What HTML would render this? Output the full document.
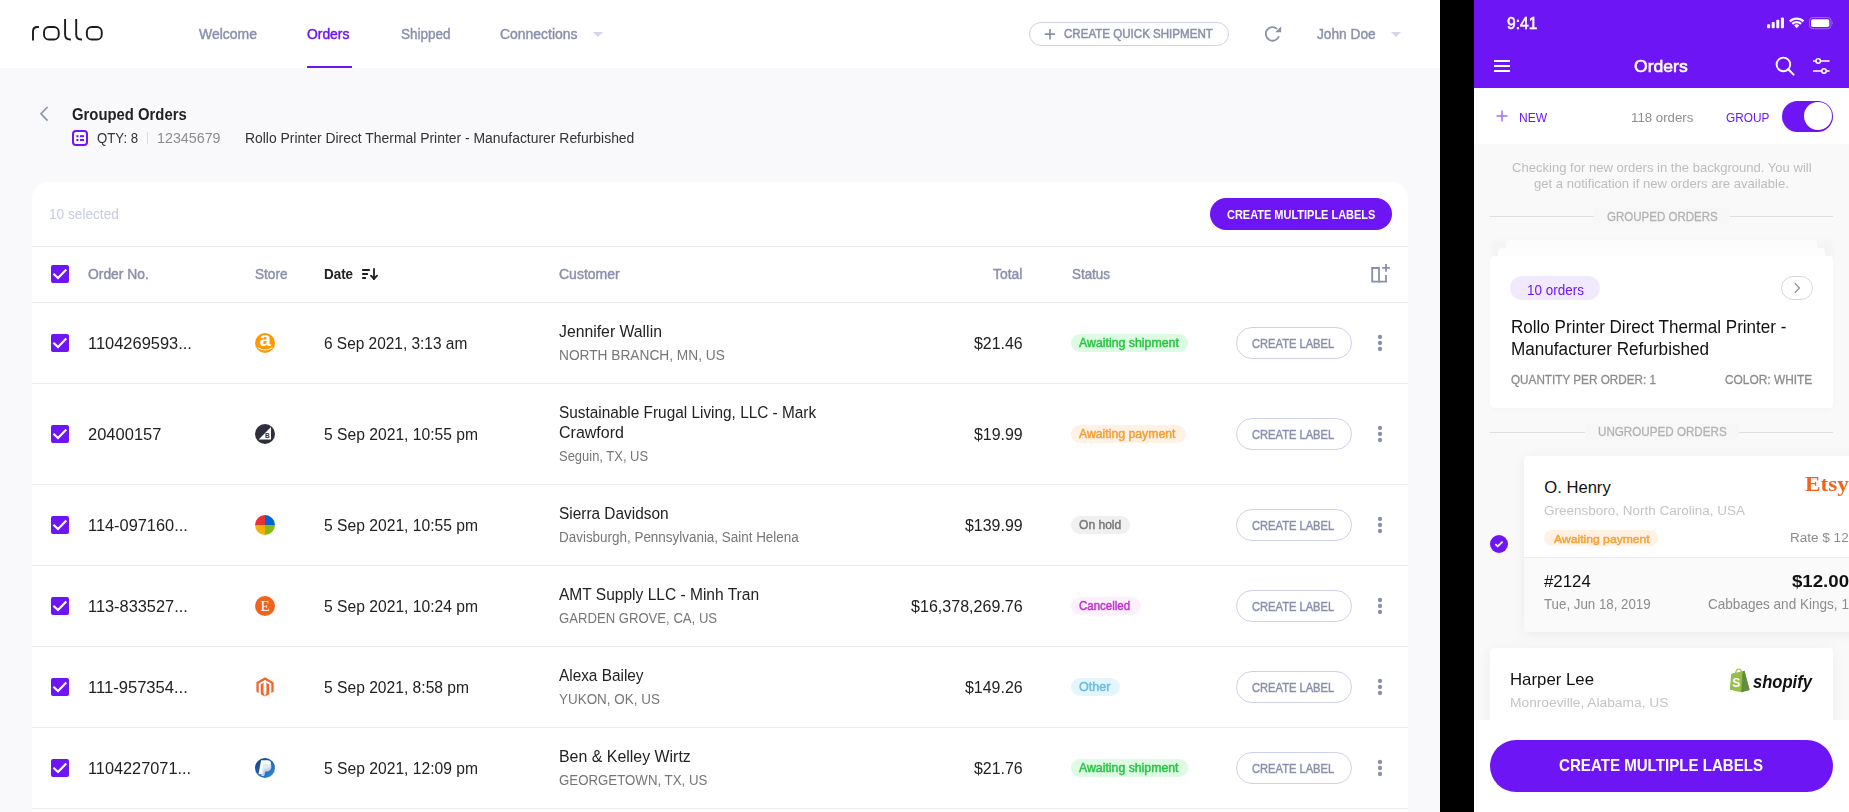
<!DOCTYPE html>
<html><head><meta charset="utf-8"><style>
html,body{margin:0;padding:0;width:1849px;height:812px;overflow:hidden;background:#f9f9fb;}
body{position:relative;font-family:"Liberation Sans",sans-serif;}
.b{position:absolute;box-sizing:content-box;}
.t{position:absolute;white-space:nowrap;line-height:normal;transform-origin:0 0;}
</style></head><body>
<div class="b" style="left:0px;top:0px;width:1440px;height:812px;background:#f9f9fb;"></div>
<div class="b" style="left:0px;top:0px;width:1440px;height:68px;background:#ffffff;"></div>
<div class="b" style="left:32px;top:182px;width:1376px;height:640px;background:#ffffff;border-radius:16px 16px 0 0;"></div>
<div class="b" style="left:1440px;top:0px;width:34px;height:812px;background:#000000;"></div>
<div class="b" style="left:1474px;top:0px;width:375px;height:812px;background:#f9f9f9;"></div>
<svg class="b" style="left:0;top:0" width="120" height="60" viewBox="0 0 120 60"><g fill="none" stroke="#1c1c1c" stroke-width="1.9" stroke-linecap="butt">
<path d="M33 40.6 V31.5 Q33 27.05 37.5 27.05 H38.9"/>
<rect x="44.05" y="27.05" width="14.7" height="12.5" rx="4.9"/>
<path d="M65.1 18.9 V34.6 Q65.1 39.55 70.1 39.55 H70.9"/>
<path d="M76.2 18.9 V34.6 Q76.2 39.55 81.2 39.55 H82"/>
<rect x="86.85" y="27.05" width="14.9" height="12.5" rx="4.9"/>
</g></svg>
<div class="t" style="left:199.20px;top:25.50px;font-size:14.80px;color:#8a90ab;-webkit-text-stroke:0.45px #8a90ab;transform:scaleX(0.9446);font-family:'Liberation Sans',sans-serif;">Welcome</div>
<div class="t" style="left:307.30px;top:25.50px;font-size:14.80px;color:#6e15f5;-webkit-text-stroke:0.45px #6e15f5;transform:scaleX(0.9370);font-family:'Liberation Sans',sans-serif;">Orders</div>
<div class="t" style="left:400.50px;top:25.50px;font-size:14.80px;color:#8a90ab;-webkit-text-stroke:0.45px #8a90ab;transform:scaleX(0.9134);font-family:'Liberation Sans',sans-serif;">Shipped</div>
<div class="t" style="left:499.50px;top:25.50px;font-size:14.80px;color:#8a90ab;-webkit-text-stroke:0.45px #8a90ab;transform:scaleX(0.9429);font-family:'Liberation Sans',sans-serif;">Connections</div>
<div class="b" style="left:307px;top:66px;width:45px;height:2px;background:#6e15f5;"></div>
<svg class="b" style="left:593px;top:32px" width="10" height="5" viewBox="0 0 10 5"><path d="M0 0 H10 L5.0 5 Z" fill="#d3d6ea"/></svg>
<svg class="b" style="left:1391px;top:32px" width="10" height="5" viewBox="0 0 10 5"><path d="M0 0 H10 L5.0 5 Z" fill="#d3d6ea"/></svg>
<div class="b" style="left:1029px;top:22px;width:198px;height:22px;background:transparent;border:1px solid #cdd0e6;border-radius:12px;"></div>
<svg class="b" style="left:1044px;top:28px" width="12" height="12" viewBox="0 0 12 12"><path d="M6 1 V11.4 M0.8 6.2 H11" stroke="#8a90ab" stroke-width="1.7"/></svg>
<div class="t" style="left:1063.50px;top:27.48px;font-size:12.50px;color:#8a90ab;-webkit-text-stroke:0.5px #8a90ab;transform:scaleX(0.9248);font-family:'Liberation Sans',sans-serif;">CREATE QUICK SHIPMENT</div>
<svg class="b" style="left:1265px;top:26px" width="17" height="17" viewBox="0 0 17 17"><path d="M14 10.2 A6.8 6.8 0 1 1 12.15 2.85" fill="none" stroke="#8a90ab" stroke-width="1.8"/><path d="M10.1 6.3 L16.1 6.3 L16.1 0.4 Z" fill="#8a90ab"/></svg>
<div class="t" style="left:1317.00px;top:25.70px;font-size:14.80px;color:#8a90ab;-webkit-text-stroke:0.45px #8a90ab;transform:scaleX(0.9266);font-family:'Liberation Sans',sans-serif;">John Doe</div>
<svg class="b" style="left:38px;top:105px" width="12" height="18" viewBox="0 0 12 18"><path d="M9.5 2 L3 8.8 L9.5 15.6" fill="none" stroke="#8a90ab" stroke-width="1.6"/></svg>
<div class="t" style="left:72.30px;top:105.15px;font-size:16.40px;color:#222;font-weight:700;transform:scaleX(0.9064);font-family:'Liberation Sans',sans-serif;">Grouped Orders</div>
<svg class="b" style="left:72px;top:130px" width="16" height="16" viewBox="0 0 16 16"><rect x="1" y="1" width="14" height="14" rx="3" fill="none" stroke="#6e15f5" stroke-width="2"/><rect x="4.4" y="5.2" width="2" height="2" fill="#6e15f5"/><rect x="8" y="5.2" width="4" height="2" fill="#6e15f5"/><rect x="4.4" y="9" width="2" height="2" fill="#6e15f5"/><rect x="8" y="9" width="4" height="2" fill="#6e15f5"/></svg>
<div class="t" style="left:96.70px;top:129.70px;font-size:14.58px;color:#333;transform:scaleX(0.9051);font-family:'Liberation Sans',sans-serif;">QTY: 8</div>
<div class="b" style="left:147px;top:132px;width:1px;height:12px;background:#dcdcdc;"></div>
<div class="t" style="left:156.80px;top:129.70px;font-size:14.58px;color:#8c8c8c;transform:scaleX(0.9792);font-family:'Liberation Sans',sans-serif;">12345679</div>
<div class="t" style="left:245.40px;top:129.80px;font-size:14.58px;color:#333;transform:scaleX(0.9541);font-family:'Liberation Sans',sans-serif;">Rollo Printer Direct Thermal Printer - Manufacturer Refurbished</div>
<div class="t" style="left:48.70px;top:205.80px;font-size:14.58px;color:#c8cbe0;transform:scaleX(0.9368);font-family:'Liberation Sans',sans-serif;">10 selected</div>
<div class="b" style="left:1210px;top:198px;width:182px;height:32px;background:#6e15f5;border-radius:16px;"></div>
<div class="t" style="left:1227.20px;top:207.77px;font-size:12.40px;color:#fff;font-weight:700;transform:scaleX(0.8858);font-family:'Liberation Sans',sans-serif;">CREATE MULTIPLE LABELS</div>
<div class="b" style="left:32px;top:246px;width:1376px;height:1px;background:#ececec;"></div>
<svg class="b" style="left:51px;top:265px" width="18" height="18" viewBox="0 0 18 18"><rect width="18" height="18" rx="2" fill="#6e15f5"/><path d="M2.4 8.8 L7 13 L15.3 4.5" fill="none" stroke="#fff" stroke-width="2.1"/></svg>
<div class="t" style="left:88.40px;top:265.70px;font-size:14.58px;color:#8a90ab;-webkit-text-stroke:0.45px #8a90ab;transform:scaleX(0.9515);font-family:'Liberation Sans',sans-serif;">Order No.</div>
<div class="t" style="left:255.20px;top:265.70px;font-size:14.58px;color:#8a90ab;-webkit-text-stroke:0.45px #8a90ab;transform:scaleX(0.9339);font-family:'Liberation Sans',sans-serif;">Store</div>
<div class="t" style="left:323.60px;top:265.70px;font-size:14.58px;color:#222;font-weight:700;transform:scaleX(0.9192);font-family:'Liberation Sans',sans-serif;">Date</div>
<svg class="b" style="left:361px;top:268px" width="18" height="13" viewBox="0 0 18 13"><g fill="#1e1e1e"><rect x="1.1" y="1.1" width="7.7" height="1.8" rx="0.5"/><rect x="1.1" y="5.1" width="5.9" height="1.8" rx="0.5"/><rect x="1.1" y="9.1" width="3.9" height="1.8" rx="0.5"/></g><path d="M13 0.9 V11" stroke="#1e1e1e" stroke-width="1.8" stroke-linecap="round"/><path d="M10 7.7 L13 10.9 L16 7.7" fill="none" stroke="#1e1e1e" stroke-width="1.9" stroke-linecap="round" stroke-linejoin="round"/></svg>
<div class="t" style="left:559.20px;top:265.70px;font-size:14.58px;color:#8a90ab;-webkit-text-stroke:0.45px #8a90ab;transform:scaleX(0.9611);font-family:'Liberation Sans',sans-serif;">Customer</div>
<div class="t" style="left:993.00px;top:265.70px;font-size:14.58px;color:#8a90ab;-webkit-text-stroke:0.45px #8a90ab;transform:scaleX(0.9528);font-family:'Liberation Sans',sans-serif;">Total</div>
<div class="t" style="left:1071.50px;top:265.70px;font-size:14.58px;color:#8a90ab;-webkit-text-stroke:0.45px #8a90ab;transform:scaleX(0.9188);font-family:'Liberation Sans',sans-serif;">Status</div>
<svg class="b" style="left:1370px;top:263px" width="21" height="21" viewBox="0 0 21 21"><g fill="none" stroke="#8a90ab" stroke-width="1.8"><path d="M9.8 5 H2.2 V18.7 H16 V12"/><path d="M9 4.1 V19.6"/><path d="M16 1.1 V8.8 M12.1 4.9 H19.8"/></g></svg>
<div class="b" style="left:32px;top:302px;width:1376px;height:1px;background:#ececec;"></div>
<svg class="b" style="left:51px;top:334.0px" width="18" height="18" viewBox="0 0 18 18"><rect width="18" height="18" rx="2" fill="#6e15f5"/><path d="M2.4 8.8 L7 13 L15.3 4.5" fill="none" stroke="#fff" stroke-width="2.1"/></svg>
<div class="t" style="left:88.40px;top:333.72px;font-size:16.66px;color:#222;transform:scaleX(0.9872);font-family:'Liberation Sans',sans-serif;">1104269593...</div>
<svg class="b" style="left:255px;top:333.0px" width="20" height="20" viewBox="0 0 20 20"><circle cx="10" cy="10" r="10" fill="#ff9900"/><text x="10.2" y="13.4" font-family="Liberation Sans" font-weight="700" font-size="20" fill="#fff" text-anchor="middle">a</text><path d="M2.8 14.6 Q10 19.4 17.4 14.6" fill="none" stroke="#fff" stroke-width="1.1"/></svg>
<div class="t" style="left:324.00px;top:333.62px;font-size:16.66px;color:#222;transform:scaleX(0.9263);font-family:'Liberation Sans',sans-serif;">6 Sep 2021, 3:13 am</div>
<div class="t" style="left:559.30px;top:321.92px;font-size:16.66px;color:#222;transform:scaleX(0.9475);font-family:'Liberation Sans',sans-serif;">Jennifer Wallin</div>
<div class="t" style="left:559.30px;top:347.10px;font-size:14.58px;color:#767676;transform:scaleX(0.9406);font-family:'Liberation Sans',sans-serif;">NORTH BRANCH, MN, US</div>
<div class="t" style="left:973.60px;top:333.52px;font-size:16.66px;color:#222;transform:scaleX(0.9539);font-family:'Liberation Sans',sans-serif;">$21.46</div>
<div class="b" style="left:1071px;top:334.0px;width:117px;height:18px;background:#dcfbe2;border-radius:9px;"></div>
<div class="t" style="left:1079.20px;top:335.96px;font-size:12.20px;color:#29c244;-webkit-text-stroke:0.45px #29c244;transform:scaleX(1.0121);font-family:'Liberation Sans',sans-serif;">Awaiting shipment</div>
<div class="b" style="left:1236px;top:327.0px;width:114px;height:30px;background:#fff;border:1px solid #cfd1e8;border-radius:16px;"></div>
<div class="t" style="left:1252.40px;top:336.69px;font-size:12.60px;color:#8a90ab;-webkit-text-stroke:0.45px #8a90ab;transform:scaleX(0.8848);font-family:'Liberation Sans',sans-serif;">CREATE LABEL</div>
<svg class="b" style="left:1376px;top:333.0px" width="8" height="20" viewBox="0 0 8 20"><g fill="#8a90ab"><circle cx="4" cy="4" r="2.15"/><circle cx="4" cy="10" r="2.15"/><circle cx="4" cy="16" r="2.15"/></g></svg>
<div class="b" style="left:32px;top:383px;width:1376px;height:1px;background:#ececec;"></div>
<svg class="b" style="left:51px;top:425.0px" width="18" height="18" viewBox="0 0 18 18"><rect width="18" height="18" rx="2" fill="#6e15f5"/><path d="M2.4 8.8 L7 13 L15.3 4.5" fill="none" stroke="#fff" stroke-width="2.1"/></svg>
<div class="t" style="left:88.40px;top:424.72px;font-size:16.66px;color:#222;transform:scaleX(0.9906);font-family:'Liberation Sans',sans-serif;">20400157</div>
<svg class="b" style="left:255px;top:424.0px" width="20" height="20" viewBox="0 0 20 20"><circle cx="10" cy="10" r="10" fill="#2f2e3d"/><path d="M3.7 15.5 L16 3 V15.5 Z" fill="#fff"/><text x="12.3" y="14" font-family="Liberation Sans" font-weight="700" font-size="6.5" fill="#2f2e3d" text-anchor="middle">B</text></svg>
<div class="t" style="left:324.00px;top:424.62px;font-size:16.66px;color:#222;transform:scaleX(0.9399);font-family:'Liberation Sans',sans-serif;">5 Sep 2021, 10:55 pm</div>
<div class="t" style="left:559.30px;top:402.92px;font-size:16.66px;color:#222;transform:scaleX(0.9228);font-family:'Liberation Sans',sans-serif;">Sustainable Frugal Living, LLC - Mark</div>
<div class="t" style="left:559.30px;top:422.92px;font-size:16.66px;color:#222;transform:scaleX(0.9608);font-family:'Liberation Sans',sans-serif;">Crawford</div>
<div class="t" style="left:559.30px;top:448.10px;font-size:14.58px;color:#767676;transform:scaleX(0.8890);font-family:'Liberation Sans',sans-serif;">Seguin, TX, US</div>
<div class="t" style="left:973.50px;top:424.52px;font-size:16.66px;color:#222;transform:scaleX(0.9558);font-family:'Liberation Sans',sans-serif;">$19.99</div>
<div class="b" style="left:1071px;top:425.0px;width:115px;height:18px;background:#fff2e4;border-radius:9px;"></div>
<div class="t" style="left:1079.20px;top:426.96px;font-size:12.20px;color:#f59e33;-webkit-text-stroke:0.45px #f59e33;transform:scaleX(1.0052);font-family:'Liberation Sans',sans-serif;">Awaiting payment</div>
<div class="b" style="left:1236px;top:418.0px;width:114px;height:30px;background:#fff;border:1px solid #cfd1e8;border-radius:16px;"></div>
<div class="t" style="left:1252.40px;top:427.69px;font-size:12.60px;color:#8a90ab;-webkit-text-stroke:0.45px #8a90ab;transform:scaleX(0.8848);font-family:'Liberation Sans',sans-serif;">CREATE LABEL</div>
<svg class="b" style="left:1376px;top:424.0px" width="8" height="20" viewBox="0 0 8 20"><g fill="#8a90ab"><circle cx="4" cy="4" r="2.15"/><circle cx="4" cy="10" r="2.15"/><circle cx="4" cy="16" r="2.15"/></g></svg>
<div class="b" style="left:32px;top:484px;width:1376px;height:1px;background:#ececec;"></div>
<svg class="b" style="left:51px;top:516.0px" width="18" height="18" viewBox="0 0 18 18"><rect width="18" height="18" rx="2" fill="#6e15f5"/><path d="M2.4 8.8 L7 13 L15.3 4.5" fill="none" stroke="#fff" stroke-width="2.1"/></svg>
<div class="t" style="left:88.40px;top:515.72px;font-size:16.66px;color:#222;transform:scaleX(0.9828);font-family:'Liberation Sans',sans-serif;">114-097160...</div>
<svg class="b" style="left:255px;top:515.0px" width="20" height="20" viewBox="0 0 20 20"><path d="M10 10 V0 A10 10 0 0 0 0 10 Z" fill="#e53238"/><path d="M10 10 V0 A10 10 0 0 1 20 10 Z" fill="#0064d2"/><path d="M10 10 H0 A10 10 0 0 0 10 20 Z" fill="#f5af02"/><path d="M10 10 H20 A10 10 0 0 1 10 20 Z" fill="#86b817"/></svg>
<div class="t" style="left:324.00px;top:515.62px;font-size:16.66px;color:#222;transform:scaleX(0.9399);font-family:'Liberation Sans',sans-serif;">5 Sep 2021, 10:55 pm</div>
<div class="t" style="left:559.30px;top:503.92px;font-size:16.66px;color:#222;transform:scaleX(0.9244);font-family:'Liberation Sans',sans-serif;">Sierra Davidson</div>
<div class="t" style="left:559.30px;top:529.10px;font-size:14.58px;color:#767676;transform:scaleX(0.9216);font-family:'Liberation Sans',sans-serif;">Davisburgh, Pennsylvania, Saint Helena</div>
<div class="t" style="left:964.60px;top:515.52px;font-size:16.66px;color:#222;transform:scaleX(0.9568);font-family:'Liberation Sans',sans-serif;">$139.99</div>
<div class="b" style="left:1071px;top:516.0px;width:59px;height:18px;background:#f0f0f0;border-radius:9px;"></div>
<div class="t" style="left:1079.20px;top:517.96px;font-size:12.20px;color:#787878;-webkit-text-stroke:0.45px #787878;transform:scaleX(0.9895);font-family:'Liberation Sans',sans-serif;">On hold</div>
<div class="b" style="left:1236px;top:509.0px;width:114px;height:30px;background:#fff;border:1px solid #cfd1e8;border-radius:16px;"></div>
<div class="t" style="left:1252.40px;top:518.69px;font-size:12.60px;color:#8a90ab;-webkit-text-stroke:0.45px #8a90ab;transform:scaleX(0.8848);font-family:'Liberation Sans',sans-serif;">CREATE LABEL</div>
<svg class="b" style="left:1376px;top:515.0px" width="8" height="20" viewBox="0 0 8 20"><g fill="#8a90ab"><circle cx="4" cy="4" r="2.15"/><circle cx="4" cy="10" r="2.15"/><circle cx="4" cy="16" r="2.15"/></g></svg>
<div class="b" style="left:32px;top:565px;width:1376px;height:1px;background:#ececec;"></div>
<svg class="b" style="left:51px;top:597.0px" width="18" height="18" viewBox="0 0 18 18"><rect width="18" height="18" rx="2" fill="#6e15f5"/><path d="M2.4 8.8 L7 13 L15.3 4.5" fill="none" stroke="#fff" stroke-width="2.1"/></svg>
<div class="t" style="left:88.40px;top:596.72px;font-size:16.66px;color:#222;transform:scaleX(0.9828);font-family:'Liberation Sans',sans-serif;">113-833527...</div>
<svg class="b" style="left:255px;top:596.0px" width="20" height="20" viewBox="0 0 20 20"><circle cx="10" cy="10" r="10" fill="#f1641e"/><text x="10" y="15.3" font-family="Liberation Serif" font-size="15" fill="#fff" text-anchor="middle">E</text></svg>
<div class="t" style="left:324.00px;top:596.62px;font-size:16.66px;color:#222;transform:scaleX(0.9399);font-family:'Liberation Sans',sans-serif;">5 Sep 2021, 10:24 pm</div>
<div class="t" style="left:559.30px;top:584.92px;font-size:16.66px;color:#222;transform:scaleX(0.9328);font-family:'Liberation Sans',sans-serif;">AMT Supply LLC - Minh Tran</div>
<div class="t" style="left:559.30px;top:610.10px;font-size:14.58px;color:#767676;transform:scaleX(0.8994);font-family:'Liberation Sans',sans-serif;">GARDEN GROVE, CA, US</div>
<div class="t" style="left:910.50px;top:596.52px;font-size:16.66px;color:#222;transform:scaleX(0.9650);font-family:'Liberation Sans',sans-serif;">$16,378,269.76</div>
<div class="b" style="left:1071px;top:597.0px;width:70px;height:18px;background:#fdf0fd;border-radius:9px;"></div>
<div class="t" style="left:1079.20px;top:598.96px;font-size:12.20px;color:#c22ed6;-webkit-text-stroke:0.45px #c22ed6;transform:scaleX(0.9438);font-family:'Liberation Sans',sans-serif;">Cancelled</div>
<div class="b" style="left:1236px;top:590.0px;width:114px;height:30px;background:#fff;border:1px solid #cfd1e8;border-radius:16px;"></div>
<div class="t" style="left:1252.40px;top:599.69px;font-size:12.60px;color:#8a90ab;-webkit-text-stroke:0.45px #8a90ab;transform:scaleX(0.8848);font-family:'Liberation Sans',sans-serif;">CREATE LABEL</div>
<svg class="b" style="left:1376px;top:596.0px" width="8" height="20" viewBox="0 0 8 20"><g fill="#8a90ab"><circle cx="4" cy="4" r="2.15"/><circle cx="4" cy="10" r="2.15"/><circle cx="4" cy="16" r="2.15"/></g></svg>
<div class="b" style="left:32px;top:646px;width:1376px;height:1px;background:#ececec;"></div>
<svg class="b" style="left:51px;top:678.0px" width="18" height="18" viewBox="0 0 18 18"><rect width="18" height="18" rx="2" fill="#6e15f5"/><path d="M2.4 8.8 L7 13 L15.3 4.5" fill="none" stroke="#fff" stroke-width="2.1"/></svg>
<div class="t" style="left:88.40px;top:677.72px;font-size:16.66px;color:#222;transform:scaleX(0.9950);font-family:'Liberation Sans',sans-serif;">111-957354...</div>
<svg class="b" style="left:255px;top:677.0px" width="20" height="20" viewBox="0 0 20 20"><path d="M10 0.3 L18.6 5.3 V14.8 L16.3 16.1 V6.6 L10 3 L3.7 6.6 V16.1 L1.4 14.8 V5.3 Z" fill="#ee672f"/><path d="M8.9 6.2 L11.1 6.2 L11.1 16.3 L10 17 L8.9 16.3 Z" fill="#fff"/><path d="M5.8 7.2 L8.9 5.8 V16.4 L10 19.5 L5.8 17.2 Z" fill="#ee672f"/><path d="M14.2 7.2 L11.1 5.8 V16.4 L10 19.5 L14.2 17.2 Z" fill="#ee672f"/><path d="M8.6 6.6 H11.4 V16.4 L10 17.2 L8.6 16.4 Z" fill="#fff"/></svg>
<div class="t" style="left:324.00px;top:677.62px;font-size:16.66px;color:#222;transform:scaleX(0.9379);font-family:'Liberation Sans',sans-serif;">5 Sep 2021, 8:58 pm</div>
<div class="t" style="left:559.30px;top:665.92px;font-size:16.66px;color:#222;transform:scaleX(0.9220);font-family:'Liberation Sans',sans-serif;">Alexa Bailey</div>
<div class="t" style="left:559.30px;top:691.10px;font-size:14.58px;color:#767676;transform:scaleX(0.9226);font-family:'Liberation Sans',sans-serif;">YUKON, OK, US</div>
<div class="t" style="left:964.60px;top:677.52px;font-size:16.66px;color:#222;transform:scaleX(0.9568);font-family:'Liberation Sans',sans-serif;">$149.26</div>
<div class="b" style="left:1071px;top:678.0px;width:49px;height:18px;background:#e5f5fd;border-radius:9px;"></div>
<div class="t" style="left:1079.20px;top:679.96px;font-size:12.20px;color:#68bde8;-webkit-text-stroke:0.45px #68bde8;transform:scaleX(1.0295);font-family:'Liberation Sans',sans-serif;">Other</div>
<div class="b" style="left:1236px;top:671.0px;width:114px;height:30px;background:#fff;border:1px solid #cfd1e8;border-radius:16px;"></div>
<div class="t" style="left:1252.40px;top:680.69px;font-size:12.60px;color:#8a90ab;-webkit-text-stroke:0.45px #8a90ab;transform:scaleX(0.8848);font-family:'Liberation Sans',sans-serif;">CREATE LABEL</div>
<svg class="b" style="left:1376px;top:677.0px" width="8" height="20" viewBox="0 0 8 20"><g fill="#8a90ab"><circle cx="4" cy="4" r="2.15"/><circle cx="4" cy="10" r="2.15"/><circle cx="4" cy="16" r="2.15"/></g></svg>
<div class="b" style="left:32px;top:727px;width:1376px;height:1px;background:#ececec;"></div>
<svg class="b" style="left:51px;top:759.0px" width="18" height="18" viewBox="0 0 18 18"><rect width="18" height="18" rx="2" fill="#6e15f5"/><path d="M2.4 8.8 L7 13 L15.3 4.5" fill="none" stroke="#fff" stroke-width="2.1"/></svg>
<div class="t" style="left:88.40px;top:758.72px;font-size:16.66px;color:#222;transform:scaleX(0.9786);font-family:'Liberation Sans',sans-serif;">1104227071...</div>
<svg class="b" style="left:255px;top:758.0px" width="20" height="20" viewBox="0 0 20 20"><defs><linearGradient id="pg" x1="0" y1="0" x2="1" y2="1"><stop offset="0" stop-color="#0c3b8a"/><stop offset="1" stop-color="#3a8fd3"/></linearGradient></defs><circle cx="10" cy="10" r="10" fill="url(#pg)"/><path d="M6.1 2.2 H12.5 Q16.8 2.5 15.8 6.8 Q14.9 10.7 10.6 10.7 H8.8 L7.6 16.2 H3.5 Z" fill="#fff"/><path d="M8.3 5.8 H13.6 Q17.3 6.2 16.2 10 Q15.3 13.4 11.5 13.4 H10.3 L9.2 18 H6.3 Z" fill="#dbe8f6" opacity="0.85"/></svg>
<div class="t" style="left:324.00px;top:758.62px;font-size:16.66px;color:#222;transform:scaleX(0.9399);font-family:'Liberation Sans',sans-serif;">5 Sep 2021, 12:09 pm</div>
<div class="t" style="left:559.30px;top:746.92px;font-size:16.66px;color:#222;transform:scaleX(0.9554);font-family:'Liberation Sans',sans-serif;">Ben &amp; Kelley Wirtz</div>
<div class="t" style="left:559.30px;top:772.10px;font-size:14.58px;color:#767676;transform:scaleX(0.9094);font-family:'Liberation Sans',sans-serif;">GEORGETOWN, TX, US</div>
<div class="t" style="left:973.50px;top:758.52px;font-size:16.66px;color:#222;transform:scaleX(0.9558);font-family:'Liberation Sans',sans-serif;">$21.76</div>
<div class="b" style="left:1071px;top:759.0px;width:117px;height:18px;background:#dcfbe2;border-radius:9px;"></div>
<div class="t" style="left:1079.20px;top:760.96px;font-size:12.20px;color:#29c244;-webkit-text-stroke:0.45px #29c244;transform:scaleX(1.0081);font-family:'Liberation Sans',sans-serif;">Awaiting shipment</div>
<div class="b" style="left:1236px;top:752.0px;width:114px;height:30px;background:#fff;border:1px solid #cfd1e8;border-radius:16px;"></div>
<div class="t" style="left:1252.40px;top:761.69px;font-size:12.60px;color:#8a90ab;-webkit-text-stroke:0.45px #8a90ab;transform:scaleX(0.8848);font-family:'Liberation Sans',sans-serif;">CREATE LABEL</div>
<svg class="b" style="left:1376px;top:758.0px" width="8" height="20" viewBox="0 0 8 20"><g fill="#8a90ab"><circle cx="4" cy="4" r="2.15"/><circle cx="4" cy="10" r="2.15"/><circle cx="4" cy="16" r="2.15"/></g></svg>
<div class="b" style="left:32px;top:808px;width:1376px;height:1px;background:#ececec;"></div>
<div class="b" style="left:1474px;top:0px;width:375px;height:88px;background:#6e15f5;"></div>
<div class="t" style="left:1506.70px;top:13.63px;font-size:16.20px;color:#fff;-webkit-text-stroke:0.55px #fff;transform:scaleX(0.9635);font-family:'Liberation Sans',sans-serif;">9:41</div>
<svg class="b" style="left:1765px;top:15px" width="72" height="16" viewBox="0 0 72 16"><g fill="#fff">
<rect x="2.1" y="9.2" width="3" height="4" rx="0.8"/><rect x="6.7" y="6.9" width="3" height="6.3" rx="0.8"/><rect x="11.3" y="4.8" width="3" height="8.4" rx="0.8"/><rect x="15.9" y="2.6" width="3" height="10.6" rx="0.8"/>
<path d="M24.01 5.56 A10.8 10.8 0 0 1 39.29 5.56 L37.66 7.19 A8.5 8.5 0 0 0 25.64 7.19 Z"/><path d="M26.49 8.04 A7.3 7.3 0 0 1 36.81 8.04 L35.19 9.66 A5.0 5.0 0 0 0 28.11 9.66 Z"/><path d="M29.03 10.58 A3.7 3.7 0 0 1 34.27 10.58 L31.65 13.2 Z"/>
<rect x="46" y="4.2" width="18.3" height="7.8" rx="1.8"/>
</g><rect x="44.5" y="2.5" width="21.5" height="11.2" rx="3.2" fill="none" stroke="rgba(255,255,255,0.35)" stroke-width="1"/><path d="M67 6 Q68.6 8 67 10 Z" fill="rgba(255,255,255,0.4)"/></svg>
<svg class="b" style="left:1494px;top:59px" width="16" height="14" viewBox="0 0 16 14"><g fill="#fff"><rect x="0" y="1" width="16" height="2"/><rect x="0" y="6" width="16" height="2"/><rect x="0" y="11" width="16" height="2"/></g></svg>
<div class="t" style="left:1634.20px;top:56.23px;font-size:17.20px;color:#fff;-webkit-text-stroke:0.6px #fff;transform:scaleX(1.0219);font-family:'Liberation Sans',sans-serif;">Orders</div>
<svg class="b" style="left:1774px;top:55px" width="22" height="22" viewBox="0 0 22 22"><circle cx="9.4" cy="9.4" r="6.8" fill="none" stroke="#fff" stroke-width="1.9"/><path d="M14.2 14.2 L19.6 19.6" stroke="#fff" stroke-width="2" stroke-linecap="round"/></svg>
<svg class="b" style="left:1812px;top:56px" width="20" height="20" viewBox="0 0 20 20"><g stroke="#fff" stroke-width="1.6" fill="#6e15f5"><path d="M1 5 H17.6 M1 15 H17.6"/><circle cx="6.2" cy="5" r="2.2"/><circle cx="12" cy="15" r="2.2"/></g></svg>
<div class="b" style="left:1474px;top:88px;width:375px;height:56px;background:#fff;"></div>
<svg class="b" style="left:1495px;top:109px" width="14" height="14" viewBox="0 0 14 14"><path d="M7 1.5 V12.5 M1.5 7 H12.5" stroke="#a56df7" stroke-width="1.5"/></svg>
<div class="t" style="left:1518.60px;top:110.07px;font-size:13.40px;color:#6e15f5;transform:scaleX(0.8992);font-family:'Liberation Sans',sans-serif;">NEW</div>
<div class="t" style="left:1631.00px;top:110.07px;font-size:13.40px;color:#8e8e8e;transform:scaleX(0.9897);font-family:'Liberation Sans',sans-serif;">118 orders</div>
<div class="t" style="left:1725.90px;top:109.77px;font-size:13.40px;color:#6e15f5;transform:scaleX(0.8830);font-family:'Liberation Sans',sans-serif;">GROUP</div>
<div class="b" style="left:1782px;top:100.5px;width:51px;height:31px;background:#6e15f5;border-radius:15.5px;"></div>
<div class="b" style="left:1803.5px;top:102px;width:28px;height:28px;background:#fff;border-radius:14px;box-shadow:0 1px 2px rgba(0,0,0,0.12);"></div>
<div class="t" style="left:1511.50px;top:160.09px;font-size:13.60px;color:#bdbdbd;transform:scaleX(0.9601);font-family:'Liberation Sans',sans-serif;">Checking for new orders in the background. You will</div>
<div class="t" style="left:1533.90px;top:176.19px;font-size:13.60px;color:#bdbdbd;transform:scaleX(0.9610);font-family:'Liberation Sans',sans-serif;">get a notification if new orders are available.</div>
<div class="b" style="left:1594px;top:208px;width:136px;height:16px;background:#f7f7f7;"></div>
<div class="t" style="left:1606.70px;top:208.61px;font-size:12.80px;color:#b2b2b2;-webkit-text-stroke:0.3px #b2b2b2;transform:scaleX(0.9004);font-family:'Liberation Sans',sans-serif;">GROUPED ORDERS</div>
<div class="b" style="left:1490px;top:216px;width:104px;height:1px;background:#dedede;"></div>
<div class="b" style="left:1730px;top:216px;width:103px;height:1px;background:#dedede;"></div>
<div class="b" style="left:1490px;top:240px;width:343px;height:170px;background:#f1f1f1;border-radius:6px;filter:blur(2px);opacity:0.6;"></div>
<div class="b" style="left:1506px;top:240px;width:311px;height:60px;background:#fcfcfc;border-radius:4px;"></div>
<div class="b" style="left:1498px;top:248px;width:327px;height:60px;background:#fdfdfd;border-radius:4px;"></div>
<div class="b" style="left:1490px;top:256px;width:343px;height:152px;background:#fff;border-radius:4px;"></div>
<div class="b" style="left:1510px;top:276px;width:90px;height:24px;background:#f1e9fe;border-radius:12px;"></div>
<div class="t" style="left:1526.70px;top:280.94px;font-size:15.20px;color:#6e15f5;transform:scaleX(0.8863);font-family:'Liberation Sans',sans-serif;">10 orders</div>
<div class="b" style="left:1781px;top:276px;width:30px;height:22px;background:#fff;border:1px solid #d8d8d8;border-radius:12px;"></div>
<svg class="b" style="left:1792px;top:282px" width="10" height="12" viewBox="0 0 10 12"><path d="M2.8 1.2 L7.4 6 L2.8 10.8" fill="none" stroke="#888" stroke-width="1.2"/></svg>
<div class="t" style="left:1510.80px;top:317.20px;font-size:17.90px;color:#111;transform:scaleX(0.9531);font-family:'Liberation Sans',sans-serif;">Rollo Printer Direct Thermal Printer -</div>
<div class="t" style="left:1510.80px;top:338.80px;font-size:17.90px;color:#111;transform:scaleX(0.9577);font-family:'Liberation Sans',sans-serif;">Manufacturer Refurbished</div>
<div class="t" style="left:1510.80px;top:372.79px;font-size:12.60px;color:#8c8c8c;-webkit-text-stroke:0.3px #8c8c8c;transform:scaleX(0.9307);font-family:'Liberation Sans',sans-serif;">QUANTITY PER ORDER: 1</div>
<div class="t" style="left:1725.30px;top:372.79px;font-size:12.60px;color:#8c8c8c;-webkit-text-stroke:0.3px #8c8c8c;transform:scaleX(0.9448);font-family:'Liberation Sans',sans-serif;">COLOR: WHITE</div>
<div class="b" style="left:1585px;top:424px;width:154px;height:16px;background:#f7f7f7;"></div>
<div class="t" style="left:1597.70px;top:424.96px;font-size:12.20px;color:#b2b2b2;-webkit-text-stroke:0.3px #b2b2b2;transform:scaleX(0.9548);font-family:'Liberation Sans',sans-serif;">UNGROUPED ORDERS</div>
<div class="b" style="left:1490px;top:432px;width:95px;height:1px;background:#dedede;"></div>
<div class="b" style="left:1739px;top:432px;width:94px;height:1px;background:#dedede;"></div>
<div class="b" style="left:1524px;top:456px;width:340px;height:176px;background:#fafafa;border-radius:4px;box-shadow:0 2px 14px rgba(0,0,0,0.06);"></div>
<div class="b" style="left:1524px;top:456px;width:340px;height:101px;background:#fff;border-radius:4px 4px 0 0;"></div>
<div class="b" style="left:1524px;top:557px;width:340px;height:1px;background:#ececec;"></div>
<div class="t" style="left:1544.30px;top:477.77px;font-size:16.60px;color:#111;font-family:'Liberation Sans',sans-serif;">O. Henry</div>
<div class="t" style="left:1544.30px;top:502.80px;font-size:13.70px;color:#c4c4c4;transform:scaleX(0.9853);font-family:'Liberation Sans',sans-serif;">Greensboro, North Carolina, USA</div>
<div class="t" style="left:1805.30px;top:471.20px;font-size:22.00px;color:#f1641e;font-weight:700;transform:scaleX(1.0517);font-family:'Liberation Serif',serif;">Etsy</div>
<div class="b" style="left:1544px;top:530px;width:114px;height:16px;background:#fff2e4;border-radius:8px;"></div>
<div class="t" style="left:1553.80px;top:531.60px;font-size:11.60px;color:#f5a035;-webkit-text-stroke:0.45px #f5a035;transform:scaleX(1.0487);font-family:'Liberation Sans',sans-serif;">Awaiting payment</div>
<div class="t" style="left:1790.30px;top:529.70px;font-size:13.70px;color:#8c8c8c;transform:scaleX(0.9882);font-family:'Liberation Sans',sans-serif;">Rate $ 12</div>
<svg class="b" style="left:1490px;top:535px" width="18" height="18" viewBox="0 0 18 18"><circle cx="9" cy="9" r="9" fill="#6e15f5"/><path d="M5.3 9.2 L7.7 11.4 L12.6 6.6" fill="none" stroke="#fff" stroke-width="1.7"/></svg>
<div class="t" style="left:1544.20px;top:571.61px;font-size:17.00px;color:#111;transform:scaleX(0.9905);font-family:'Liberation Sans',sans-serif;">#2124</div>
<div class="t" style="left:1792.00px;top:571.61px;font-size:17.00px;color:#111;font-weight:700;transform:scaleX(1.0962);font-family:'Liberation Sans',sans-serif;">$12.00</div>
<div class="t" style="left:1544.20px;top:596.16px;font-size:14.40px;color:#8c8c8c;transform:scaleX(0.9234);font-family:'Liberation Sans',sans-serif;">Tue, Jun 18, 2019</div>
<div class="t" style="left:1708.00px;top:596.16px;font-size:14.40px;color:#8c8c8c;transform:scaleX(0.9419);font-family:'Liberation Sans',sans-serif;">Cabbages and Kings, 1</div>
<div class="b" style="left:1490px;top:648px;width:343px;height:90px;background:#fff;border-radius:4px;box-shadow:0 2px 14px rgba(0,0,0,0.05);"></div>
<div class="t" style="left:1510.20px;top:670.07px;font-size:16.60px;color:#111;transform:scaleX(1.0114);font-family:'Liberation Sans',sans-serif;">Harper Lee</div>
<div class="b" style="left:1500px;top:690px;width:169px;height:24px;overflow:hidden"><div class="t" style="left:10.20px;top:4.60px;font-size:13.70px;color:#c4c4c4;transform:scaleX(1.0060);font-family:'Liberation Sans',sans-serif;">Monroeville, Alabama, USA</div></div>
<svg class="b" style="left:1729px;top:668px" width="22" height="25" viewBox="0 0 22 25"><path d="M2.2 5.8 L15.5 2.8 L20.6 22 L12.2 24.3 L0.8 21.8 Z" fill="#95bf47"/><path d="M15.5 2.8 L20.6 22 L12.2 24.3 L13.6 3.6 Z" fill="#5e8e3e"/><path d="M6.5 5 Q7.5 0.8 10 1 Q12.3 1.3 12.5 4.5" fill="none" stroke="#95bf47" stroke-width="1.2"/><text x="7.3" y="19" font-family="Liberation Sans" font-weight="700" font-size="12" fill="#fff" text-anchor="middle">S</text></svg>
<div class="t" style="left:1753.30px;top:672.20px;font-size:18.00px;color:#111;font-weight:700;font-style:italic;transform:scaleX(0.9213);font-family:'Liberation Sans',sans-serif;">shopify</div>
<div class="b" style="left:1474px;top:720px;width:375px;height:92px;background:#fff;"></div>
<div class="b" style="left:1490px;top:740px;width:343px;height:52px;background:#6e15f5;border-radius:26px;"></div>
<div class="t" style="left:1558.80px;top:755.95px;font-size:16.40px;color:#fff;font-weight:700;transform:scaleX(0.9211);font-family:'Liberation Sans',sans-serif;">CREATE MULTIPLE LABELS</div>
</body></html>
